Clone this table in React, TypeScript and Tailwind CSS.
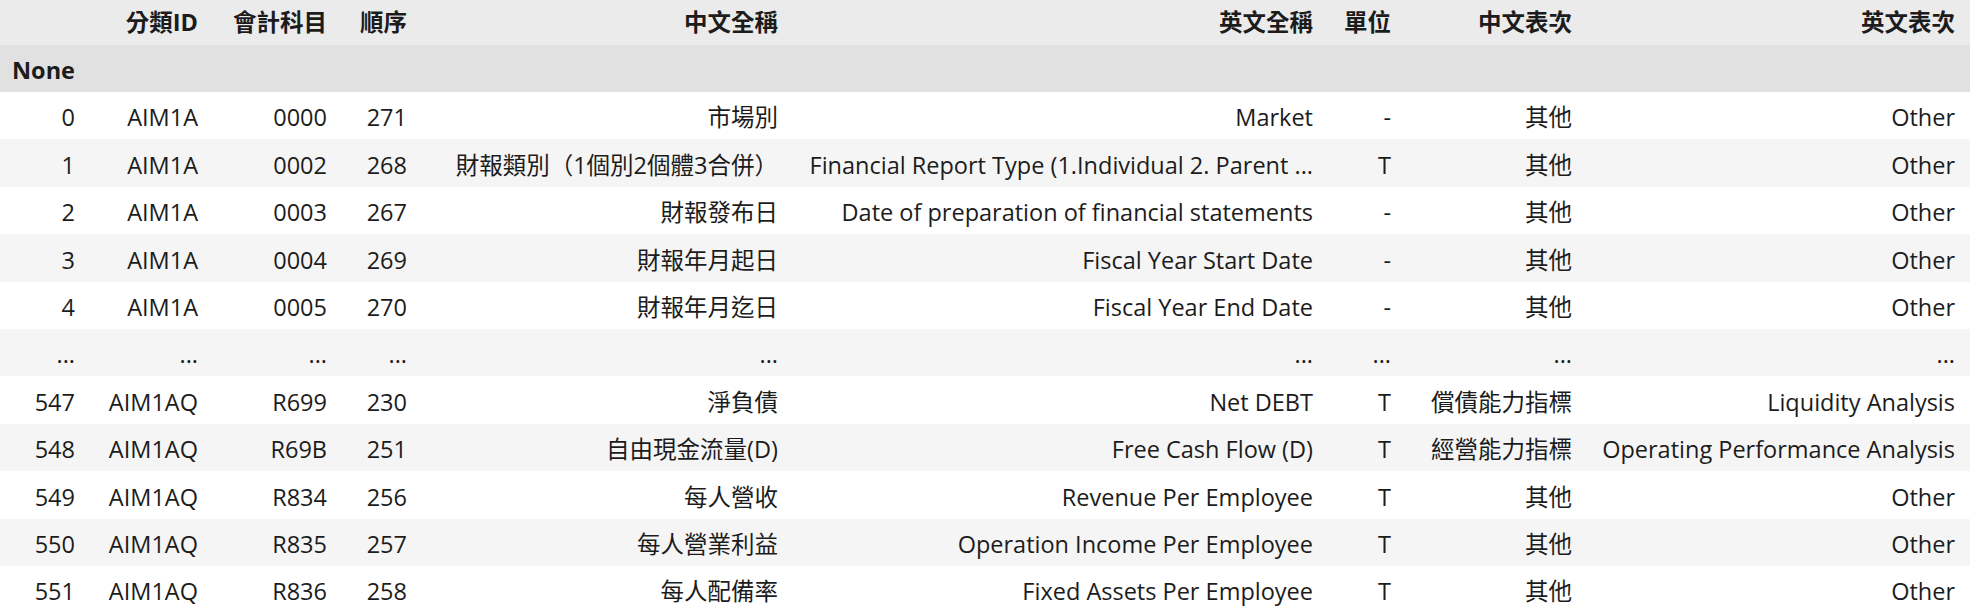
import React from 'react'

type Row = string[]

const columns = ['', '分類ID', '會計科目', '順序', '中文全稱', '英文全稱', '單位', '中文表次', '英文表次']
const widths = [90, 123, 129, 80, 371, 535, 78, 181, 383]

const rows: Row[] = [
  ['0', 'AIM1A', '0000', '271', '市場別', 'Market', '-', '其他', 'Other'],
  ['1', 'AIM1A', '0002', '268', '財報類別（1個別2個體3合併）', 'Financial Report Type (1.Individual 2. Parent ...', 'T', '其他', 'Other'],
  ['2', 'AIM1A', '0003', '267', '財報發布日', 'Date of preparation of financial statements', '-', '其他', 'Other'],
  ['3', 'AIM1A', '0004', '269', '財報年月起日', 'Fiscal Year Start Date', '-', '其他', 'Other'],
  ['4', 'AIM1A', '0005', '270', '財報年月迄日', 'Fiscal Year End Date', '-', '其他', 'Other'],
  ['...', '...', '...', '...', '...', '...', '...', '...', '...'],
  ['547', 'AIM1AQ', 'R699', '230', '淨負債', 'Net DEBT', 'T', '償債能力指標', 'Liquidity Analysis'],
  ['548', 'AIM1AQ', 'R69B', '251', '自由現金流量(D)', 'Free Cash Flow (D)', 'T', '經營能力指標', 'Operating Performance Analysis'],
  ['549', 'AIM1AQ', 'R834', '256', '每人營收', 'Revenue Per Employee', 'T', '其他', 'Other'],
  ['550', 'AIM1AQ', 'R835', '257', '每人營業利益', 'Operation Income Per Employee', 'T', '其他', 'Other'],
  ['551', 'AIM1AQ', 'R836', '258', '每人配備率', 'Fixed Assets Per Employee', 'T', '其他', 'Other'],
]

export default function App() {
  return (
    <div
      className="min-h-screen bg-white text-[#1c1c1c] text-[23.5px] overflow-hidden [text-spacing-trim:space-all]"
      style={{ fontFamily: '"Open Sans", "Noto Sans CJK TC", sans-serif' }}
    >
      <table className="table-fixed border-collapse w-[1970px]">
        <colgroup>
          {widths.map((w, i) => (
            <col key={i} style={{ width: w }} />
          ))}
        </colgroup>
        <thead>
          <tr className="h-[45px] bg-[#ebebeb]">
            {columns.map((c, i) => (
              <th key={i} className="px-[15px] text-right font-bold whitespace-nowrap leading-none">
                {c}
              </th>
            ))}
          </tr>
          <tr className="h-[47px] bg-[#e1e1e1]">
            <th className="pl-[12px] pt-[5px] text-left font-bold leading-none">None</th>
            {columns.slice(1).map((_, i) => (
              <th key={i}></th>
            ))}
          </tr>
        </thead>
        <tbody>
          {rows.map((row, r) => (
            <tr key={r} className={r % 2 === 1 ? 'h-[47.4px] bg-[#f5f5f5]' : 'h-[47.4px] bg-white'}>
              {row.map((cell, i) => (
                <td key={i} className="px-[15px] pt-[5px] text-right whitespace-nowrap overflow-hidden leading-none">
                  {cell}
                </td>
              ))}
            </tr>
          ))}
        </tbody>
      </table>
    </div>
  )
}
